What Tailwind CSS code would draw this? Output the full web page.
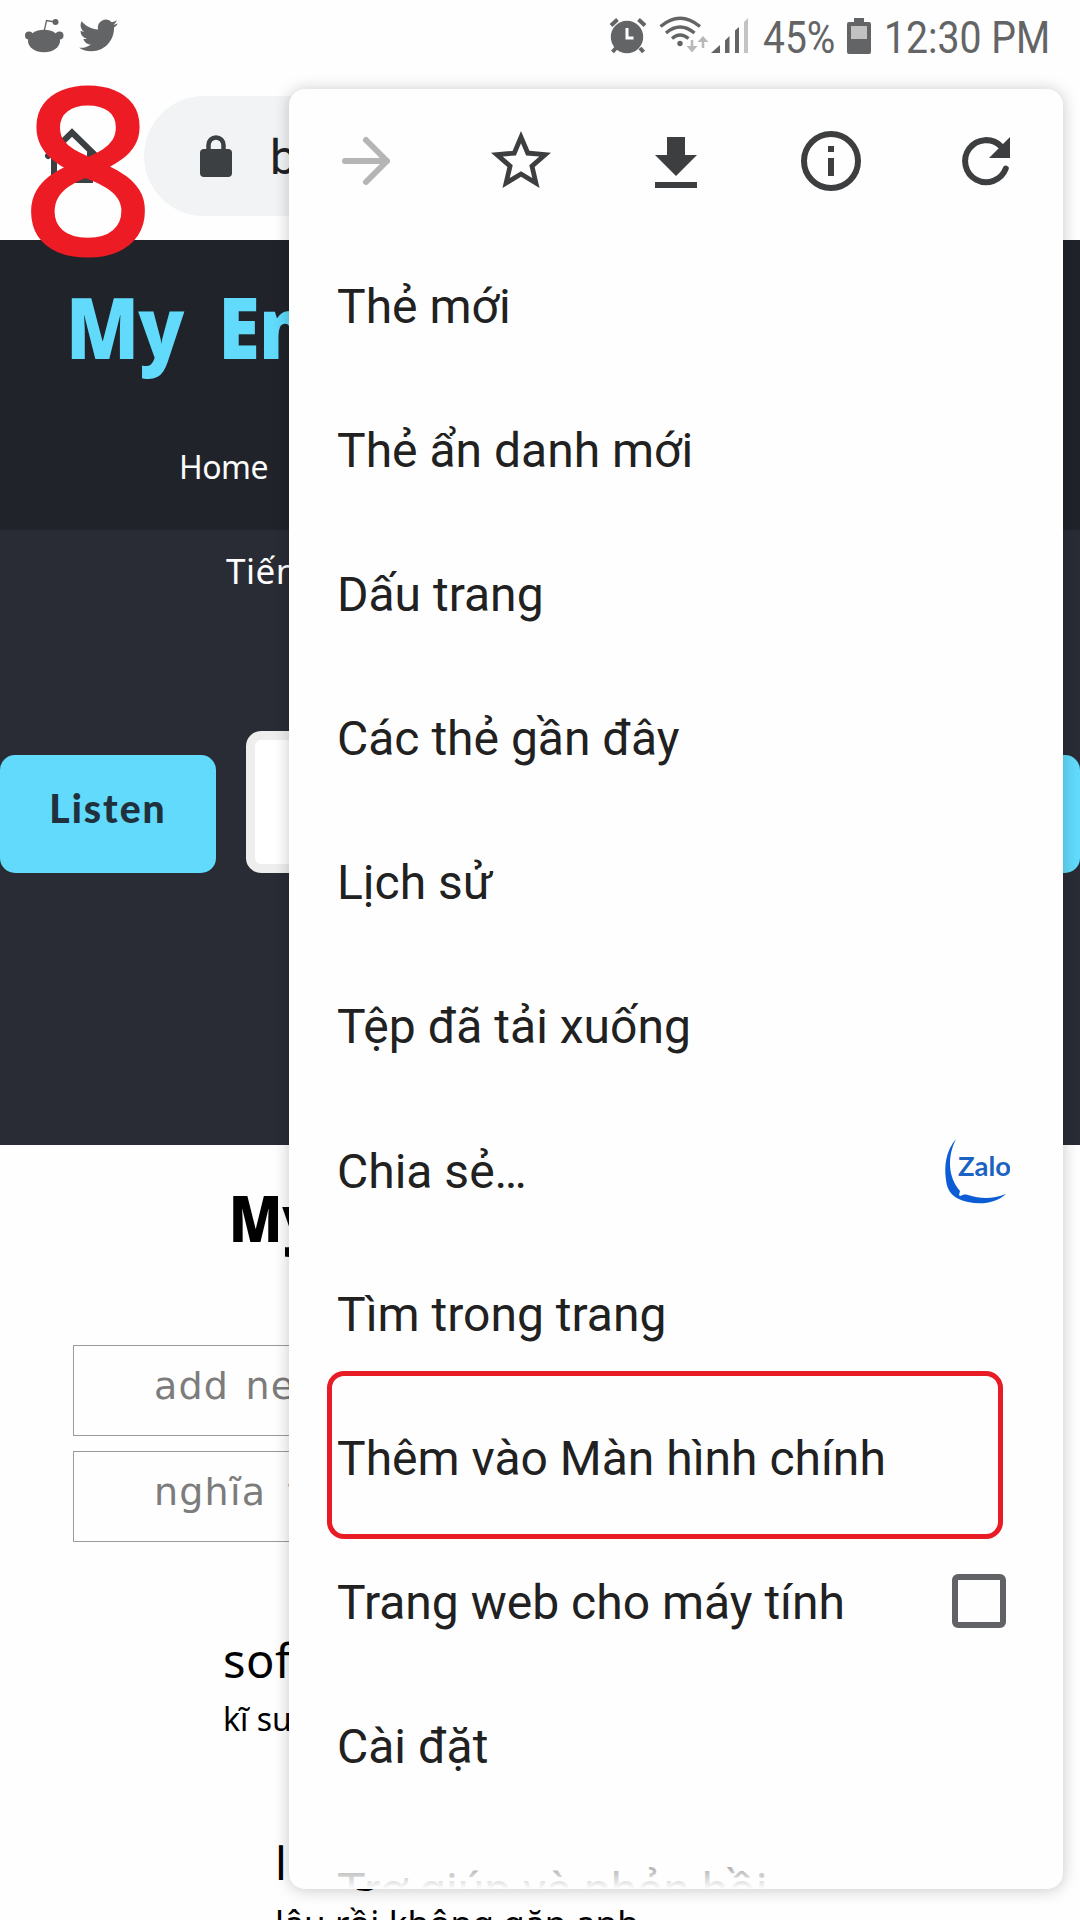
<!DOCTYPE html>
<html lang="vi">
<head>
<meta charset="utf-8">
<title>My English</title>
<script src="https://cdn.jsdelivr.net/npm/@tailwindcss/browser@4"></script>
</head>
<body class="bg-white">
<div class="relative h-[1920px] w-[1080px] overflow-hidden bg-[#fefefe] font-['Roboto',sans-serif]">

  <!-- status bar -->
  <header class="flex h-[72px] items-start text-[#636466]">
    <svg class="ml-[25px] mt-[18px] h-[35px] w-[39px]" viewBox="0 0 39 35" fill="currentColor">
      <ellipse cx="19" cy="23" rx="16" ry="11.3"/><circle cx="4" cy="17.5" r="4"/><circle cx="34.5" cy="17.5" r="4"/>
      <circle cx="30.5" cy="4" r="3"/><path d="M19.2 13 21.5 2.6 30 4" fill="none" stroke="currentColor" stroke-width="1.3"/>
    </svg>
    <svg class="ml-[15px] mt-4 h-[39px] w-[39px]" viewBox="0 0 24 24" fill="currentColor"><path d="M23.953 4.57a10 10 0 01-2.825.775 4.958 4.958 0 002.163-2.723c-.951.555-2.005.959-3.127 1.184a4.92 4.92 0 00-8.384 4.482C7.69 8.095 4.067 6.13 1.64 3.162a4.822 4.822 0 00-.666 2.475c0 1.71.87 3.213 2.188 4.096a4.904 4.904 0 01-2.228-.616v.06a4.923 4.923 0 003.946 4.827 4.996 4.996 0 01-2.212.085 4.936 4.936 0 004.604 3.417 9.867 9.867 0 01-6.102 2.105c-.39 0-.779-.023-1.17-.067a13.995 13.995 0 007.557 2.209c9.053 0 13.998-7.496 13.998-13.985 0-.21 0-.42-.015-.63A9.935 9.935 0 0024 4.59z"/></svg>
    <svg class="ml-[490px] mt-4 h-10 w-[40px]" viewBox="0 0 40 40">
      <g stroke="currentColor" fill="none"><path d="M3 9.5 9.5 3.5M30.5 3.5 37 9.5" stroke-width="4"/><path d="M8 32 4.5 36M32 32 35.500 36" stroke-width="4"/></g>
      <circle cx="19" cy="21" r="16.2" fill="currentColor"/><path d="M19 12v10h6.500" fill="none" stroke="#fff" stroke-width="3"/>
    </svg>
    <svg class="ml-[11px] mt-4 h-10 w-[50px]" viewBox="0 0 50 40" fill="none" stroke="currentColor">
      <g stroke-width="3.300"><path d="M1.500 10.500Q21-6 41 10.500"/><path d="M7 17Q21 5 35.500 17"/><path d="M13 22.500Q21 15.500 29.500 22.500"/></g>
      <circle cx="21" cy="27.500" r="2.700" fill="currentColor" stroke="none"/>
      <path d="M33 24v9M44 32v-9" stroke="#b9b9b9" stroke-width="2.500"/><path d="M27.500 30h11L33 36.500zM38.500 26h11L44 20z" fill="#b9b9b9" stroke="none"/>
    </svg>
    <svg class="ml-[2px] mt-4 h-10 w-[38px]" viewBox="0 0 38 40" fill="currentColor">
      <path d="M0 37 9 29v8zM14 24.500 18.500 20v17H14zM24 14.500 28 11v26h-4z"/><path d="M33 6 37 2v35h-4z" fill="#c3c3c3"/>
    </svg>
    <div class="ml-[14px] mt-[10px] w-[75px] origin-left scale-x-[0.865] whitespace-nowrap text-[45px] leading-[56px]">45%</div>
    <svg class="ml-[9px] mt-[18px] h-9 w-6" viewBox="0 0 24 36"><path d="M7 0h10v4h5q2 0 2 2v28q0 2-2 2H2q-2 0-2-2V6q0-2 2-2h5z" fill="currentColor"/><path d="M4 8h16v13H4z" fill="#c1c1c1"/></svg>
    <div class="ml-[13px] mt-[10px] w-[170px] origin-left scale-x-[0.87] whitespace-nowrap text-[45px] leading-[56px]">12:30 PM</div>
  </header>

  <!-- browser toolbar -->
  <div class="flex h-[168px] items-center text-[#3c4043]">
    <svg class="h-[72px] w-[144px]" viewBox="0 0 144 72" fill="none" stroke="currentColor" stroke-width="6" stroke-linecap="round"><path d="M48 36 72 12.500 96 36M54 33v27h36V33"/></svg>
    <div class="flex h-[120px] w-[900px] items-center rounded-[60px] bg-[#f1f3f4] pl-14">
      <svg class="h-[42px] w-8" viewBox="0 0 32 42"><rect y="14" width="32" height="28" rx="4" fill="currentColor"/><path d="M8.500 15v-5a7.500 7.500 0 0 1 15 0v5" fill="none" stroke="currentColor" stroke-width="4.500"/></svg>
      <span class="ml-[38px] pt-[3px] text-[48px] text-[#202124]">b</span>
    </div>
  </div>

  <!-- web page -->
  <div class="flex h-[290px] flex-col items-start bg-[#20232a] font-['Noto_Sans',sans-serif]">
    <h1 class="ml-[66px] mt-[34px] whitespace-nowrap text-[85px] font-black leading-[104px] tracking-[-1px] text-[#61dafb]"><span class="inline-block origin-left scale-x-[0.89] [word-spacing:18px]">My En</span></h1>
    <span class="ml-[179px] mt-[67px] text-[32px] leading-[44px] tracking-[-0.500px] text-[#fbfbfb]">Home</span>
  </div>
  <div class="h-[615px] bg-[#292c35] font-['Noto_Sans',sans-serif]">
    <div class="h-[201px] pl-[226px] pt-[17px] text-[35px] leading-[48px] tracking-[0.500px] text-white">Tiến</div>
    <div class="flex h-[142px] items-end">
      <div class="flex h-[118px] w-[216px] items-center justify-center rounded-[15px] bg-[#61dafb] pb-[11px] font-['Lato',sans-serif] text-[39px] font-black tracking-[2px] text-[#20303c]">Listen</div>
      <div class="ml-[30px] h-[142px] w-[588px] rounded-[15px] border-[9px] border-[#eeeeef] bg-white"></div>
      <div class="ml-[30px] h-[118px] w-[216px] rounded-[15px] bg-[#61dafb]"></div>
    </div>
  </div>
  <div class="font-['Noto_Sans',sans-serif] text-black">
    <h2 class="h-[200px] pl-[229px] pt-[30px] text-[64px] font-black leading-[86px]"><span class="inline-block origin-left scale-x-[0.86]">My</span></h2>
    <div class="flex flex-col gap-[15px] pl-[73px] font-['DejaVu_Sans',sans-serif] text-[38px] tracking-[1.200px] text-[#7c7c7c]">
      <div class="h-[91px] w-[934px] border border-[#9a9a9a] pl-[80px] pt-[12px] leading-[56px] [word-spacing:3px]">add ne</div>
      <div class="h-[91px] w-[934px] border border-[#9a9a9a] pl-[80px] pt-[12px] leading-[56px] [word-spacing:8px]">nghĩa t</div>
    </div>
    <div class="flex h-[202px] flex-col pl-[223px] pt-[88px]"><span class="text-[47px] leading-[60px] tracking-[0.500px]">sof</span><span class="mt-[7px] text-[32px] leading-[44px]">kĩ sư</span></div>
    <div class="flex flex-col whitespace-nowrap pl-[275px] pt-[88px]"><span class="text-[46px] leading-[60px] tracking-[3px]">long</span><span class="mt-[7px] text-[35px] leading-[48px] tracking-[0.150px]">lâu rồi không gặp anh</span></div>
  </div>

  <!-- overflow menu -->
  <nav class="absolute left-[289px] top-[89px] h-[1800px] w-[774px] overflow-hidden rounded-[16px] bg-[#fefefe] text-[48px] text-[#212121]">
    <div class="flex h-[144px] items-center text-[#3c3e40]">
      <div class="flex flex-1 justify-center"><svg class="h-[72px] w-[72px]" viewBox="0 0 24 24" fill="none" stroke="#b5b5b5" stroke-width="2" stroke-linecap="round" stroke-linejoin="round"><path d="M5 12h14M12 5l7 7-7 7"/></svg></div>
      <div class="flex flex-1 justify-center"><svg class="h-[72px] w-[72px]" viewBox="0 0 24 24" fill="currentColor"><path d="M22 9.240l-7.190-.620L12 2 9.190 8.630 2 9.240l5.460 4.730L5.820 21 12 17.270 18.180 21l-1.630-7.030L22 9.240zM12 15.400l-3.760 2.270 1-4.280-3.320-2.880 4.380-.380L12 6.100l1.710 4.040 4.380.380-3.320 2.880 1 4.280L12 15.400z"/></svg></div>
      <div class="flex flex-1 justify-center"><svg class="h-[72px] w-[72px]" viewBox="0 0 24 24" fill="currentColor"><path d="M19 10h-4V4H9v6H5l7 7 7-7zM5 19v2h14v-2H5z"/></svg></div>
      <div class="flex flex-1 justify-center"><svg class="h-[72px] w-[72px]" viewBox="0 0 24 24" fill="currentColor"><circle cx="12" cy="12" r="9" fill="none" stroke="currentColor" stroke-width="2"/><path d="M11 7h2v2h-2zM11 11h2v6h-2z"/></svg></div>
      <div class="flex flex-1 justify-center"><svg class="h-[72px] w-[72px]" viewBox="0 0 24 24"><path d="M18.600 14.500A7 7 0 1 1 17 7.100" fill="none" stroke="currentColor" stroke-width="2" stroke-linecap="round"/><path d="M20 4v7h-7z" fill="currentColor"/></svg></div>
    </div>
    <div class="flex h-36 items-center pl-12 pt-1">Thẻ mới</div>
    <div class="flex h-36 items-center pl-12 pt-1">Thẻ ẩn danh mới</div>
    <div class="flex h-36 items-center pl-12 pt-1">Dấu trang</div>
    <div class="flex h-36 items-center pl-12 pt-1">Các thẻ gần đây</div>
    <div class="flex h-36 items-center pl-12 pt-1">Lịch sử</div>
    <div class="flex h-36 items-center pl-12 pt-1">Tệp đã tải xuống</div>
    <div class="flex h-36 items-center justify-between pl-12 pr-[53px] pt-[5px]">Chia sẻ…
      <svg class="h-[72px] w-[72px]" viewBox="0 0 72 72"><path d="M18 3C8 15 6 29 8 44c1 12 8 19 22 22 14 3 28 1 38-8-13 5-25 5-38 1-4-1-5 0-8 1l-1-1 1-4C10 41 9 21 18 3z" fill="#0b5cd5"/><text x="20" y="40" textLength="53" lengthAdjust="spacingAndGlyphs" fill="#1b62c2" class="font-['Lato',sans-serif] text-[27px] font-bold">Zalo</text></svg>
    </div>
    <div class="flex h-36 items-center pl-12 pt-1">Tìm trong trang</div>
    <div class="flex h-36 items-center pl-12 pt-1">Thêm vào Màn hình chính</div>
    <div class="flex h-36 items-center justify-between pl-12 pr-[57px] pt-1">Trang web cho máy tính
      <span class="mb-1 h-[54px] w-[54px] rounded-[6px] border-[6px] border-[#616266]"></span>
    </div>
    <div class="flex h-36 items-center pl-12 pt-1">Cài đặt</div>
    <div class="flex h-36 items-center pl-12 pt-1">Trợ giúp và phản hồi</div>
    <div class="absolute inset-x-0 bottom-0 h-[44px] bg-linear-to-b from-[#fefefe]/30 to-[#fefefe]"></div>
  </nav>
  <div class="pointer-events-none absolute left-[289px] top-[89px] h-[1800px] w-[774px] rounded-[16px] shadow-[0_1px_16px_rgba(0,0,0,0.22)]"></div>

  <!-- step annotations -->
  <div class="absolute left-[327px] top-[1371px] h-[168px] w-[676px] rounded-[17px] border-[5px] border-[#e81c24]"></div>
  <div class="absolute left-[22px] top-[5px] font-['Open_Sans',sans-serif] text-[227px] leading-[320px] text-[#ed1c24]"><span class="inline-block origin-left scale-x-[1.02] [-webkit-text-stroke:5px_#ed1c24]">8</span></div>
</div>
</body>
</html>
